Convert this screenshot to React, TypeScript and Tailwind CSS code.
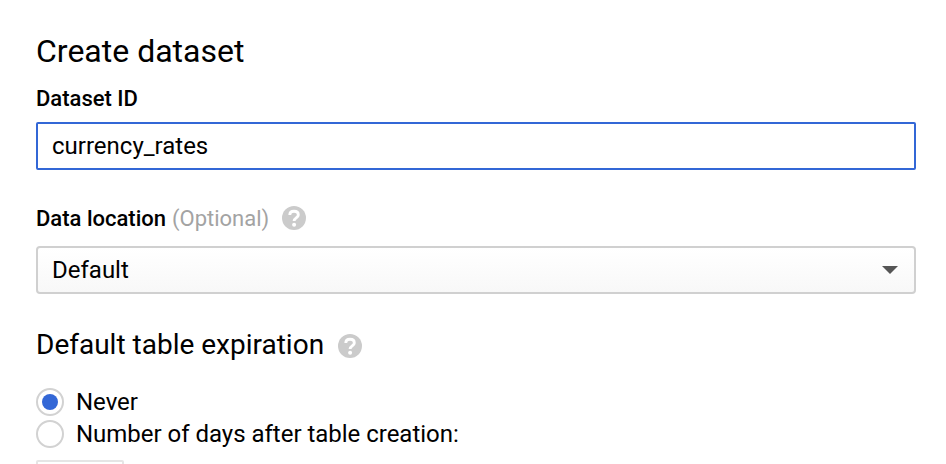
const Help = () => (
  <svg viewBox="0 0 24 24" className="size-6 shrink-0" fill="none" aria-hidden="true">
    <circle cx="12" cy="12" r="12" fill="#cbcbcb" />
    <path d="M7.8 9.1C7.8 6.7 9.5 5.3 12 5.3s4.3 1.4 4.3 3.6c0 2.9-4.2 3-4.2 6" stroke="white" strokeWidth="2.9" />
    <circle cx="12.1" cy="18.7" r="2" fill="white" />
  </svg>
);

const Radio = ({ label, checked = false }: { label: string; checked?: boolean }) => (
  <div role="radio" aria-checked={checked} className="flex h-8 items-center">
    <span className="flex size-7 items-center justify-center rounded-full border-2 border-[#d2d2d2] bg-white">
      {checked && <span className="size-4 rounded-full bg-[#3367d6]" />}
    </span>
    <span className="ml-3 text-[24px] leading-8 tracking-[-0.02px]">{label}</span>
  </div>
);

export default function App() {
  return (
    <main className="h-[464px] w-[946px] overflow-hidden bg-white pl-9 pr-[30px] pt-[31px] font-['Roboto',sans-serif] text-black">
      <h1 className="h-10 whitespace-nowrap text-[32px] leading-10">Create dataset</h1>
      <div className="mt-3.5 h-7 text-[22px] font-medium leading-7">Dataset ID</div>
      <div className="mt-[9px] flex h-12 items-center rounded-[2px] border-2 border-[#3367d6] px-3.5 text-[24px]">currency_rates</div>
      <div className="mt-8 flex h-8 items-center text-[22px]">
        <span className="font-medium">Data location</span>
        <span className="ml-1.5 mr-[13px] text-[#a3a3a3]">(Optional)</span>
        <Help />
      </div>
      <div className="mt-3 flex h-12 items-center justify-between rounded-[4px] border-2 border-[#d0d0d0] bg-linear-to-b from-white to-[#f8f8f8] pl-3.5 pr-4 text-[24px]">
        <span>Default</span>
        <span className="border-x-8 border-t-8 border-x-transparent border-t-[#555]" />
      </div>
      <div className="mt-8 flex h-10 items-center text-[28px]">
        <h2 className="mr-3.5 pb-0.5">Default table expiration</h2>
        <Help />
      </div>
      <div className="mt-5">
        <Radio label="Never" checked />
        <Radio label="Number of days after table creation:" />
      </div>
      <div className="mt-2.5 h-12 w-[88px] rounded-[2px] border-2 border-[#e5e5e5]" />
    </main>
  );
}
